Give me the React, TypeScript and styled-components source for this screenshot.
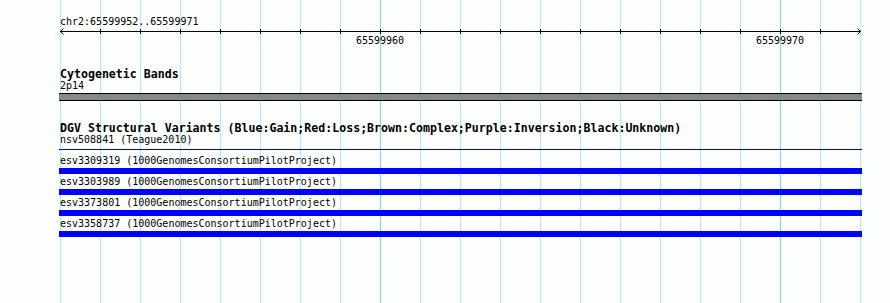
import React from 'react'
import styled, { createGlobalStyle } from 'styled-components'

const GlobalStyle = createGlobalStyle`
  html, body {
    margin: 0;
    padding: 0;
    background: #fcfefc;
  }
  body {
    font-family: "DejaVu Sans Mono", "Liberation Mono", monospace;
    color: #000;
  }
`

const Page = styled.div`
  width: 890px;
  height: 303px;
  overflow: hidden;
  padding-left: 60px;
  box-sizing: border-box;
  display: flex;
`

const Canvas = styled.div`
  width: 801px;
  height: 100%;
  display: flex;
  flex-direction: column;
  padding-top: 16px;
  box-sizing: border-box;
  background-image: linear-gradient(to right, #80d4f2 0 1px, transparent 1px),
    linear-gradient(to right, #80d4f2 0 1px, transparent 1px),
    linear-gradient(to right, #a6ecf2 0 1px, transparent 1px);
  background-size: 1px 100%, 1px 100%, 40px 100%;
  background-position: 320px 0, 720px 0, 0 0;
  background-repeat: no-repeat, no-repeat, repeat-x;
`

const Label = styled.div`
  font-size: 10px;
  line-height: 12px;
  height: 12px;
  white-space: pre;
`

const Axis = styled.svg`
  display: block;
  width: 802px;
  height: 7px;
`

const TickLabels = styled.div`
  display: grid;
  grid-template-columns: repeat(20, 40px);
  height: 12px;
`

const TickLabel = styled(Label)`
  text-align: center;
`

const TrackTitle = styled.div`
  margin-top: 20px;
  font-size: 11.6px;
  font-weight: bold;
  line-height: 14px;
  height: 14px;
  white-space: pre;
`

const TrackSub = styled.div`
  font-size: 10px;
  line-height: 10px;
  height: 10px;
  white-space: pre;
`

const BandBar = styled.div`
  margin-top: 2px;
  margin-left: -1px;
  width: 803px;
  height: 8px;
  box-sizing: border-box;
  border-top: 1px solid #000;
  border-bottom: 1px solid #000;
  background: #878787;
`

const Rule = styled.div`
  margin-top: 4px;
  margin-left: -1px;
  width: 803px;
  height: 1px;
  background: #0000c8;
`

const Rows = styled.div`
  display: flex;
  flex-direction: column;
  gap: 2px;
  padding-top: 5px;
`

const Row = styled.div`
  display: flex;
  flex-direction: column;
`

const VariantBar = styled.div<{ $color: string }>`
  margin-top: 1px;
  margin-left: -1px;
  width: 803px;
  height: 6px;
  background: ${p => p.$color};
`

const ticks = [
  { index: 8, label: '65599960' },
  { index: 18, label: '65599970' },
]

const variants = [
  { id: 'esv3309319', source: '1000GenomesConsortiumPilotProject' },
  { id: 'esv3303989', source: '1000GenomesConsortiumPilotProject' },
  { id: 'esv3373801', source: '1000GenomesConsortiumPilotProject' },
  { id: 'esv3358737', source: '1000GenomesConsortiumPilotProject' },
]

const Ruler: React.FC = () => {
  const marks = []
  for (let x = 40; x <= 760; x += 40) marks.push(x)
  return (
    <Axis viewBox="0 0 802 7">
      <rect x={0} y={3} width={801} height={1} fill="#000" />
      {marks.map(x => (
        <rect key={x} x={x} y={1} width={1} height={5} fill="#000" />
      ))}
      <path d="M3.5 0.5 L0.5 3.5 L3.5 6.5" fill="none" stroke="#000" strokeWidth={1} />
      <path d="M797.5 0.5 L800.5 3.5 L797.5 6.5" fill="none" stroke="#000" strokeWidth={1} />
    </Axis>
  )
}

const App: React.FC = () => {
  return (
    <>
      <GlobalStyle />
      <Page>
        <Canvas>
          <Label>chr2:65599952..65599971</Label>
          <Ruler />
          <TickLabels>
            {ticks.map(t => (
              <TickLabel key={t.label} style={{ gridColumn: `${t.index} / span 2` }}>
                {t.label}
              </TickLabel>
            ))}
          </TickLabels>

          <TrackTitle>Cytogenetic Bands</TrackTitle>
          <TrackSub>2p14</TrackSub>
          <BandBar />

          <TrackTitle>
            DGV Structural Variants (Blue:Gain;Red:Loss;Brown:Complex;Purple:Inversion;Black:Unknown)
          </TrackTitle>
          <TrackSub>nsv508841 (Teague2010)</TrackSub>
          <Rule />

          <Rows>
            {variants.map(v => (
              <Row key={v.id}>
                <Label>
                  {v.id} ({v.source})
                </Label>
                <VariantBar $color="#0000ff" />
              </Row>
            ))}
          </Rows>
        </Canvas>
      </Page>
    </>
  )
}

export default App
